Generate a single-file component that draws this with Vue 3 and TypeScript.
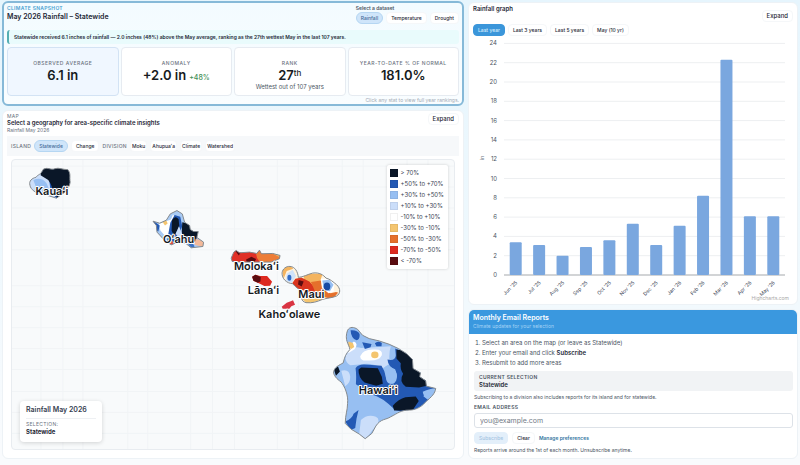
<script setup lang="ts">
import { ref } from 'vue'

interface Stat {
  label: string
  value: string
  sup?: string
  delta?: string
  note?: string
}

const datasets = ['Rainfall', 'Temperature', 'Drought']
const dataset = ref('Rainfall')

const stats: Stat[] = [
  { label: 'Observed average', value: '6.1 in' },
  { label: 'Anomaly', value: '+2.0 in', delta: '+48%' },
  { label: 'Rank', value: '27', sup: 'th', note: 'Wettest out of 107 years' },
  { label: 'Year-to-date % of normal', value: '181.0%' },
]

const divisions = ['Moku', 'Ahupuaʻa', 'Climate', 'Watershed']

const legend = [
  { color: '#0a1728', label: '> 70%' },
  { color: '#2359b4', label: '+50% to +70%' },
  { color: '#97bff2', label: '+30% to +50%' },
  { color: '#cbdefa', label: '+10% to +30%' },
  { color: '#ffffff', label: '-10% to +10%' },
  { color: '#f4c56f', label: '-30% to -10%' },
  { color: '#e5702c', label: '-50% to -30%' },
  { color: '#dd2a20', label: '-70% to -50%' },
  { color: '#5a0c10', label: '< -70%' },
]

const islands = [
  { name: 'Kauaʻi', x: 40, y: 35 },
  { name: 'Oʻahu', x: 167, y: 83 },
  { name: 'Molokaʻi', x: 245, y: 110 },
  { name: 'Lānaʻi', x: 252, y: 134 },
  { name: 'Maui', x: 300, y: 138 },
  { name: 'Kahoʻolawe', x: 278, y: 158 },
  { name: 'Hawaiʻi', x: 367, y: 235 },
]

const gridX = [29, 51, 71, 116, 136, 179, 201, 223, 266, 287, 331, 352, 396, 417]
const gridY = [6, 27, 48, 69, 90, 126, 147, 168, 189, 210, 232, 253, 274]

const ranges = ['Last year', 'Last 3 years', 'Last 5 years', 'May (10 yr)']
const range = ref('Last year')

const rainfall = [
  { month: "Jun '25", value: 3.4 },
  { month: "Jul '25", value: 3.1 },
  { month: "Aug '25", value: 2 },
  { month: "Sep '25", value: 2.9 },
  { month: "Oct '25", value: 3.6 },
  { month: "Nov '25", value: 5.3 },
  { month: "Dec '25", value: 3.1 },
  { month: "Jan '26", value: 5.1 },
  { month: "Feb '26", value: 8.2 },
  { month: "Mar '26", value: 22.3 },
  { month: "Apr '26", value: 6.1 },
  { month: "May '26", value: 6.1 },
]
const ticks = Array.from({ length: 13 }, (_, i) => i * 2)
const plot = { left: 35, right: 316, base: 239, unit: 9.65 }
const step = (plot.right - plot.left) / rainfall.length
const centre = (i: number): number => plot.left + step * (i + 0.5)
const yOf = (v: number): number => plot.base - v * plot.unit

const email = ref('')
</script>

<template>
  <main class="page">
    <div class="column">
      <section class="snapshot">
        <header class="snapshot-head">
          <div>
            <p class="eyebrow blue">Climate snapshot</p>
            <h1 class="title-lg">May 2026 Rainfall – Statewide</h1>
          </div>
          <div class="datasets">
            <p class="datasets-label">Select a dataset</p>
            <div class="dataset-row">
              <button
                v-for="d in datasets"
                :key="d"
                type="button"
                class="btn"
                :class="{ selected: d === dataset }"
                @click="dataset = d"
              >{{ d }}</button>
            </div>
          </div>
        </header>
        <p class="banner">Statewide received 6.1 inches of rainfall — 2.0 inches (48%) above the May average, ranking as the 27th wettest May in the last 107 years.</p>
        <div class="stats">
          <button v-for="(s, i) in stats" :key="s.label" type="button" class="stat" :class="{ current: i === 0 }">
            <span class="stat-label">{{ s.label }}</span>
            <span class="stat-value">{{ s.value }}<sup v-if="s.sup">{{ s.sup }}</sup><small v-if="s.delta">{{ s.delta }}</small></span>
            <span v-if="s.note" class="stat-note">{{ s.note }}</span>
          </button>
        </div>
        <p class="hint">Click any stat to view full year rankings.</p>
      </section>

      <section class="card map-card">
        <header class="map-head">
          <div>
            <p class="eyebrow">Map</p>
            <h2 class="title">Select a geography for area-specific climate insights</h2>
            <p class="sub">Rainfall May 2026</p>
          </div>
          <button type="button" class="btn expand">Expand</button>
        </header>
        <div class="toolbar">
          <span class="tool-label">Island</span>
          <button type="button" class="btn selected">Statewide</button>
          <button type="button" class="btn">Change</button>
          <span class="tool-label">Division</span>
          <button v-for="d in divisions" :key="d" type="button" class="btn small">{{ d }}</button>
        </div>
        <div class="map">
          <svg class="map-svg" viewBox="0 0 443 290" role="img" aria-label="Rainfall anomaly map of Hawaiʻi">
            <defs>
              <clipPath id="kauai"><path d="M130 196C145 188 152 200 165 194C178 190 187 197 204 197C214 210 208 218 211 235C207 255 195 266 184 272L170 283L148 276L125 271C108 268 92 257 90 244C86 231 96 223 108 220C115 210 121 215 130 196Z" /></clipPath>
              <clipPath id="oahu"><path d="M40 67L60 73L80 64L92 45L112 35L128 45L135 70L150 80L152 92L162 98L176 98L172 116L192 130L190 143L155 147L140 135L120 128L95 138L78 128L52 100L50 80Z" /></clipPath>
              <clipPath id="molokai"><path d="M275 178L283 160L290 155L300 162L330 160L352 164L360 154L366 165L400 164L422 170L420 180L395 190L300 190L278 188Z" /></clipPath>
              <clipPath id="maui"><path d="M428 222C430 210 440 202 452 203C467 204 475 218 477 236C492 235 504 227 520 223C540 220 553 229 560 238C573 241 582 250 592 258C605 270 604 285 592 292C578 298 563 298 550 302C533 309 520 314 500 312C482 306 488 296 490 285C484 273 468 266 460 255C442 254 427 240 428 222Z" /></clipPath>
              <clipPath id="hawaii"><path d="M85 50C92 38 104 40 115 47L130 65L150 75L180 82L210 92L238 105L262 120L280 138L282 165L304 178L302 190L320 202L322 218L350 225C348 240 338 250 320 265C305 284 285 290 270 290C245 290 235 300 215 310C200 320 185 315 170 338L158 360L138 376L120 362L95 347L78 330C78 305 85 290 85 270C88 245 76 218 65 205C53 197 42 185 43 175C46 160 60 155 72 148C76 130 80 120 92 108C90 92 74 80 85 50Z" /></clipPath>
            </defs>
            <g class="graticule">
              <line v-for="x in gridX" :key="'x' + x" :x1="x" y1="0" :x2="x" y2="290" />
              <line v-for="y in gridY" :key="'y' + y" x1="0" :y1="y" x2="443" :y2="y" />
            </g>

            <g transform="translate(-12 -56) scale(.33333)">
              <g clip-path="url(#kauai)">
                <path fill="#cbdefa" d="M80 180h140v110H80z" />
                <path fill="#97bff2" d="M100 228Q125 218 140 238L160 285H102Q116 260 100 228Z" />
                <path fill="#2359b4" d="M118 202L148 228L152 262L175 290L160 190Z" />
                <path fill="#0a1728" d="M125 190H220V285H180L160 270Q158 245 145 228L122 214Z" />
              </g>
              <path class="coast" d="M130 196C145 188 152 200 165 194C178 190 187 197 204 197C214 210 208 218 211 235C207 255 195 266 184 272L170 283L148 276L125 271C108 268 92 257 90 244C86 231 96 223 108 220C115 210 121 215 130 196Z" />
            </g>

            <g transform="translate(128 39) scale(.33333)">
              <g clip-path="url(#oahu)">
                <path fill="#a9cbf5" d="M30 25h170v130H30z" />
                <path fill="#fff" d="M58 75L94 62L100 47L110 60L84 120L62 95Z" />
                <path fill="#f4c56f" d="M68 68L80 65L84 74L76 80Z" />
                <path fill="#2359b4" d="M36 62L60 80L56 98L46 92ZM92 72L105 48L122 54L128 82L110 128H82Z" />
                <path fill="#0a1728" d="M97 65Q106 48 117 61L119 82L104 112L96 96ZM128 70L145 74L178 94L168 128L135 132L126 108Z" />
                <path fill="#cbdefa" d="M108 105L118 82L128 106L124 125Z" />
                <path fill="#df4b42" d="M78 133L98 126L103 140H80Z" />
                <path fill="#f3b99a" d="M168 120L195 128L192 145L165 138Z" />
                <path fill="#3971c6" d="M146 136L158 130L165 143L156 149Z" />
              </g>
              <path class="coast" d="M40 67L60 73L80 64L92 45L112 35L128 45L135 70L150 80L152 92L162 98L176 98L172 116L192 130L190 143L155 147L140 135L120 128L95 138L78 128L52 100L50 80Z" />

              <g clip-path="url(#molokai)">
                <path fill="#e03026" d="M270 150h100v45H270z" />
                <path fill="#ed7d37" d="M344 150H430V195H366Q350 180 350 165Z" />
                <path fill="#5a0c10" d="M286 154L307 156L298 170ZM320 182L336 174L350 181L344 192H322Z" />
                <path fill="#f4c56f" d="M400 164L424 168L418 174Z" />
              </g>
              <path class="coast" d="M275 178L283 160L290 155L300 162L330 160L352 164L360 154L366 165L400 164L422 170L420 180L395 190L300 190L278 188Z" />

              <path fill="#dd2a20" d="M338 234L348 228L362 232L383 232L398 249L392 261L375 262L355 252L342 246Z" />
              <path fill="#5a0c10" d="M338 234L348 228L364 235L363 248L355 252L342 246Z" />
              <path fill="#d93442" d="M427 324L442 312L454 308L461 305L467 318L456 323L450 330L430 330Z" />

              <g clip-path="url(#maui)">
                <path fill="#fff3de" d="M420 195h190v125H420z" />
                <path fill="#f4b45f" d="M425 200Q455 200 462 210L442 217L433 239ZM495 225H550L540 255L512 264L492 246Z" />
                <path fill="#cfe2fa" d="M442 225L460 213L470 232L457 253L440 247Z" />
                <ellipse fill="#2f6ac6" cx="450" cy="237" rx="6" ry="9" />
                <path fill="#d9351f" d="M468 240L486 236L510 248L528 269L558 283L575 290L555 296L528 288L496 276L475 270L458 254Z" />
                <path fill="#5a0c10" d="M478 244L493 248L487 263L476 257Z" />
                <path fill="#e5702c" d="M515 250L545 245L548 263L574 284L600 278L580 302L545 293L526 276Z" />
                <path fill="#fff" d="M545 240L570 239L590 254L588 277L568 284L548 268Z" />
                <path fill="#97bff2" d="M549 245L570 243L583 258L572 278L554 273Z" />
                <ellipse fill="#174aa4" cx="563" cy="263" rx="10" ry="12" />
                <path fill="#fff3de" d="M586 252L604 264V284L588 279L583 274Z" />
                <path fill="#f4c56f" d="M488 300L530 292L550 302L505 316Z" />
              </g>
              <path class="coast" d="M428 222C430 210 440 202 452 203C467 204 475 218 477 236C492 235 504 227 520 223C540 220 553 229 560 238C573 241 582 250 592 258C605 270 604 285 592 292C578 298 563 298 550 302C533 309 520 314 500 312C482 306 488 296 490 285C484 273 468 266 460 255C442 254 427 240 428 222Z" />
            </g>

            <g transform="translate(308 154) scale(.33333)">
              <g clip-path="url(#hawaii)">
                <path fill="#97bff2" d="M30 30h330v360H30z" />
                <path fill="#cbdefa" d="M82 118Q100 96 126 103L215 98Q208 120 212 150L190 165Q160 145 120 153L93 155Q72 142 82 118ZM66 172Q90 165 93 190Q93 210 78 218ZM125 320Q145 300 170 310Q190 320 160 350L138 380L120 362Z" />
                <path fill="#fff" d="M84 100L104 84Q119 91 106 107L88 118ZM123 128Q132 105 168 108Q192 108 188 125Q180 143 145 141Q123 143 123 128Z" />
                <ellipse fill="#f4c56f" cx="167" cy="124" rx="11" ry="10" />
                <path fill="#f4c56f" d="M88 84L101 88L105 100L96 106L85 99Z" />
                <path fill="#2359b4" d="M94 50Q114 48 121 61Q123 77 112 80Q96 76 94 50ZM129 86L157 91L154 101L137 106ZM167 89Q176 80 188 88L187 98L172 98ZM205 138Q229 143 230 125L228 105L300 140L360 220L320 235L313 248L330 262L270 300L228 290Q190 250 155 242L110 212Q112 183 109 164Q118 149 148 154L187 157Q198 174 200 190Q202 219 225 208Q237 190 228 167Q207 160 205 138Z" />
                <path fill="#97bff2" d="M198 160Q226 159 233 181Q236 201 224 210Q207 215 200 191ZM311 235Q333 224 351 224L345 242L325 251Q313 251 311 235Z" />
                <path fill="#0a1728" d="M118 168L126 162L176 164L188 190L191 211L171 217L136 207Q117 192 118 168ZM232 108L246 110L290 138L330 215L300 222L260 220Q238 204 252 181Q242 166 245 149L232 135ZM221 277Q238 256 259 251L290 249L299 263L280 291H225ZM44 168L56 158L62 174L50 187Z" />
                <path fill="#2359b4" d="M78 324Q99 316 103 301L118 290L112 315L108 344L95 350Z" />
              </g>
              <path class="coast" d="M85 50C92 38 104 40 115 47L130 65L150 75L180 82L210 92L238 105L262 120L280 138L282 165L304 178L302 190L320 202L322 218L350 225C348 240 338 250 320 265C305 284 285 290 270 290C245 290 235 300 215 310C200 320 185 315 170 338L158 360L138 376L120 362L95 347L78 330C78 305 85 290 85 270C88 245 76 218 65 205C53 197 42 185 43 175C46 160 60 155 72 148C76 130 80 120 92 108C90 92 74 80 85 50Z" />
            </g>

            <text v-for="i in islands" :key="i.name" class="island" :x="i.x" :y="i.y">{{ i.name }}</text>
          </svg>

          <ul class="legend">
            <li v-for="l in legend" :key="l.label"><i :style="{ background: l.color }"></i>{{ l.label }}</li>
          </ul>

          <div class="selection">
            <p class="selection-title">Rainfall May 2026</p>
            <p class="eyebrow">Selection:</p>
            <p class="selection-name">Statewide</p>
          </div>
        </div>
      </section>
    </div>

    <div class="column">
      <section class="card chart-card">
        <header class="chart-head">
          <h2 class="title">Rainfall graph</h2>
          <button type="button" class="btn expand">Expand</button>
        </header>
        <div class="ranges">
          <button
            v-for="r in ranges"
            :key="r"
            type="button"
            class="btn range"
            :class="{ active: r === range }"
            @click="range = r"
          >{{ r }}</button>
        </div>
        <svg class="chart" viewBox="0 0 328 268" role="img" aria-label="Monthly rainfall in inches">
          <g v-for="t in ticks" :key="t">
            <line class="gridline" :class="{ axis: t === 0 }" :x1="plot.left" :x2="plot.right" :y1="yOf(t)" :y2="yOf(t)" />
            <text class="tick" x="28" :y="yOf(t) + 2">{{ t }}</text>
          </g>
          <text class="unit" transform="translate(15 122) rotate(-90)">in</text>
          <g v-for="(r, i) in rainfall" :key="r.month">
            <rect class="bar" :x="centre(i) - 6" :y="yOf(r.value)" width="12" :height="r.value * plot.unit" rx="1" />
            <text class="month" :transform="`translate(${centre(i) + 2} ${plot.base + 8}) rotate(-45)`">{{ r.month }}</text>
          </g>
          <text class="credit" x="320" y="264">Highcharts.com</text>
        </svg>
      </section>

      <section class="card reports">
        <header class="reports-head">
          <h2>Monthly Email Reports</h2>
          <p>Climate updates for your selection</p>
        </header>
        <form class="reports-body" @submit.prevent>
          <ol class="steps">
            <li>Select an area on the map (or leave as Statewide)</li>
            <li>Enter your email and click <strong>Subscribe</strong></li>
            <li>Resubmit to add more areas</li>
          </ol>
          <div class="current-box">
            <p class="field-label">Current selection</p>
            <p class="current-name">Statewide</p>
          </div>
          <p class="fine">Subscribing to a division also includes reports for its island and for statewide.</p>
          <label class="field-label" for="email">Email address</label>
          <input id="email" v-model="email" type="email" placeholder="you@example.com" />
          <div class="actions">
            <button type="submit" class="btn subscribe" disabled>Subscribe</button>
            <button type="button" class="btn" @click="email = ''">Clear</button>
            <a href="#preferences">Manage preferences</a>
          </div>
          <p class="fine">Reports arrive around the 1st of each month. Unsubscribe anytime.</p>
        </form>
      </section>
    </div>
  </main>
</template>

<style>
body {
  background: linear-gradient(#e6f5fd, #eef8fd 50%, #f9fbfd 96%);
  min-height: 100vh;
}
</style>

<style scoped>
.page {
  display: grid;
  grid-template-columns: minmax(0, 7fr) minmax(0, 5fr);
  gap: 4px;
  padding: 1px 2px 6px;
  font-family: Inter, "Liberation Sans", sans-serif;
  font-size: 5px;
  line-height: 8px;
  color: #1f2937;
}
.page * { box-sizing: border-box; }
h1, h2, p, ul, ol { margin: 0; padding: 0; font-size: inherit; }
.column { display: flex; flex-direction: column; gap: 4px; min-width: 0; }
.card {
  background: #fff;
  border: 1px solid #edf2f6;
  border-radius: 6px;
}

.btn {
  font: inherit;
  font-weight: 500;
  line-height: 10px;
  color: #1f2937;
  background: #fff;
  border: 1px solid #f5f7f9;
  border-radius: 4px;
  padding: 0 4px;
  white-space: nowrap;
}
.btn.small { padding: 0 1px; }
.btn.selected {
  background: #cfe5fa;
  border-color: #b5d6f2;
  color: #476b98;
  border-radius: 6px;
}
.btn.expand { font-size: 6px; align-self: flex-start; }
.eyebrow {
  font-size: 5px;
  line-height: 6px;
  letter-spacing: 0.06em;
  text-transform: uppercase;
  color: #6b7280;
}
.eyebrow.blue { color: #4a9fd0; font-weight: 600; line-height: 7px; }
.title { font-size: 6px; line-height: 8px; font-weight: 600; }
.title-lg { font-size: 7px; line-height: 9px; font-weight: 600; }

.snapshot {
  background: linear-gradient(#f3fbff, #f9fdff);
  border: 2px solid #86b9d8;
  border-radius: 6px;
  padding: 2px 3px 1px;
}
.snapshot-head { display: flex; justify-content: space-between; height: 25px; }
.datasets-label { font-weight: 600; color: #4b5563; line-height: 7px; }
.dataset-row { display: flex; gap: 3px; }
.banner {
  background: #e9fbfc;
  border-left: 2px solid #55aeb2;
  border-radius: 3px;
  padding: 3px 5px;
  font-weight: 600;
  line-height: 8px;
}
.stats { display: grid; grid-template-columns: repeat(4, 1fr); gap: 2px; margin-top: 3px; }
.stat {
  font: inherit;
  color: inherit;
  display: flex;
  flex-direction: column;
  align-items: center;
  padding: 11px 2px 2px;
  min-height: 49px;
  background: #fff;
  border: 1px solid #e6ebf1;
  border-radius: 4px;
}
.stat.current { background: #f0f7ff; border-color: #d3e3f4; }
.stat-label {
  line-height: 8px;
  letter-spacing: 0.1em;
  text-transform: uppercase;
  color: #6b7280;
  font-weight: 500;
}
.stat-value { font-size: 13px; line-height: 16px; font-weight: 600; color: #171b21; }
.stat-value sup { font-size: 8px; line-height: 8px; vertical-align: 4px; font-weight: 500; }
.stat-value small { font-size: 7px; font-weight: 500; color: #3f8f55; margin-left: 3px; }
.stat-note { font-size: 6px; line-height: 7px; color: #4b5563; }
.hint { text-align: right; color: #a3abb5; line-height: 6px; margin-top: 1px; }

.map-card { padding: 2px 4px 7px; flex: 1; }
.map-head { display: flex; justify-content: space-between; align-items: flex-start; height: 23px; }
.sub { line-height: 6px; color: #6b7280; }
.toolbar {
  display: flex;
  align-items: center;
  gap: 3px;
  height: 20px;
  padding: 0 4px;
  background: #f6f8fa;
}
.tool-label {
  letter-spacing: 0.06em;
  text-transform: uppercase;
  font-weight: 500;
  color: #6b7280;
}
.map {
  position: relative;
  margin: 3px 4px 0;
  border: 1px solid #e8ecf0;
  border-radius: 4px;
  background: #f8fafb;
}
.map-svg { display: block; width: 100%; }
.graticule line { stroke: #f1f4f6; stroke-width: 1; }
.coast { fill: none; stroke: #84898d; stroke-width: 3; }
.island {
  font-size: 11px;
  font-weight: 600;
  text-anchor: middle;
  fill: #14181d;
  stroke: #fff;
  stroke-width: 2px;
  stroke-linejoin: round;
  paint-order: stroke;
}
.legend {
  position: absolute;
  top: 5px;
  right: 6px;
  padding: 2px 4px 3px 3px;
  list-style: none;
  background: #fff;
  border-radius: 2px;
  box-shadow: 0 0 3px rgb(0 0 0 / 18%);
  font-size: 6px;
  line-height: 11px;
  color: #374151;
}
.legend li { display: flex; align-items: center; gap: 3px; }
.legend i { width: 8px; height: 8px; outline: 1px solid rgb(0 0 0 / 6%); outline-offset: -1px; }
.selection {
  position: absolute;
  left: 8px;
  bottom: 7px;
  width: 82px;
  padding: 4px 6px 5px;
  background: #fff;
  border-radius: 4px;
  box-shadow: 0 1px 4px rgb(0 0 0 / 16%);
}
.selection-title {
  font-size: 7px;
  line-height: 10px;
  font-weight: 600;
  color: #374151;
  border-bottom: 1px solid #eef0f3;
  padding-bottom: 3px;
  margin-bottom: 2px;
  white-space: nowrap;
}
.selection-name { font-size: 6px; line-height: 10px; font-weight: 700; }

.chart-card { padding: 2px 0 0; margin-top: 1px; }
.chart-head { display: flex; justify-content: space-between; padding: 0 4px; height: 19px; }
.chart-head .expand { margin-top: 5px; }
.ranges { display: flex; gap: 3px; padding: 0 4px; }
.btn.range.active { background: #3b96da; border-color: #3b96da; color: #d6ecfc; }
.chart { display: block; width: 100%; }
.gridline { stroke: #edeff1; stroke-width: 1; }
.gridline.axis { stroke: #a5a9ad; }
.tick { font-size: 6px; text-anchor: end; fill: #4b5563; }
.unit { font-size: 5px; text-anchor: middle; fill: #6b7280; }
.bar { fill: #7aa7df; }
.month { font-size: 5px; text-anchor: end; fill: #374151; }
.credit { font-size: 5px; text-anchor: end; fill: #a8a8a8; }

.reports { overflow: hidden; flex: 1; }
.reports-head { background: #3a98df; color: #fff; padding: 4px 5px; margin: -1px -1px 0; }
.reports-head h2 { font-size: 7px; line-height: 9px; font-weight: 600; }
.reports-head p { line-height: 8px; color: #a5d2f5; }
.reports-body { padding: 4px 4px 2px 5px; display: flex; flex-direction: column; }
.steps { padding-left: 8px; font-size: 6px; line-height: 10px; color: #4b5563; }
.steps strong { color: #1f2937; font-weight: 600; }
.current-box { background: #f1f3f5; border-radius: 3px; padding: 3px 5px; margin-top: 3px; }
.field-label {
  line-height: 7px;
  font-weight: 600;
  letter-spacing: 0.06em;
  text-transform: uppercase;
  color: #4b5563;
}
.current-name { font-size: 6px; line-height: 7px; font-weight: 600; }
.fine { line-height: 12px; color: #4b5563; }
label.field-label { margin-top: 1px; }
input {
  font: inherit;
  font-size: 7px;
  line-height: 10px;
  height: 15px;
  width: 100%;
  margin-top: 2px;
  padding: 0 5px;
  border: 1px solid #dde2e8;
  border-radius: 3px;
  background: #fff;
  color: #1f2937;
}
input::placeholder { color: #737b86; opacity: 1; }
.actions { display: flex; align-items: center; gap: 4px; margin-top: 4px; }
.btn.subscribe { background: #e3effa; border-color: #e3effa; color: #a3c4e2; }
.actions a { color: #34759f; font-weight: 600; text-decoration: none; }
</style>
